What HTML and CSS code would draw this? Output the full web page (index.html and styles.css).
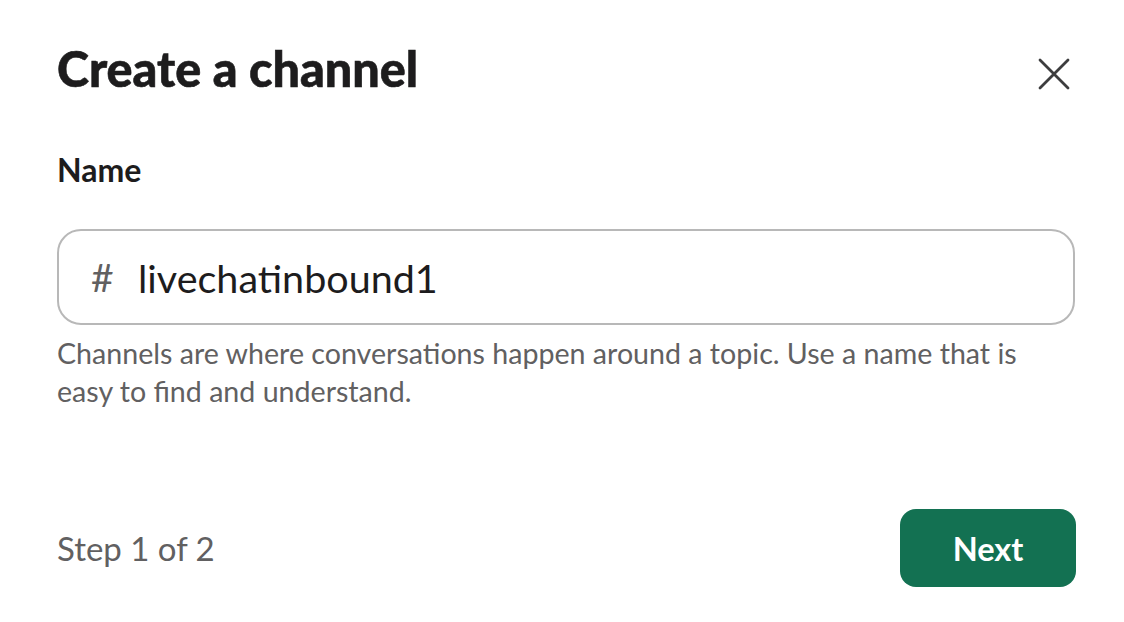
FILE: index.html
```html
<!DOCTYPE html>
<html lang="en">
<head>
<meta charset="utf-8">
<title>Create a channel</title>
<link rel="stylesheet" href="styles.css">
</head>
<body>
<div class="modal">
  <header class="modal-header">
    <h1 class="title">Create a channel</h1>
    <button class="close" aria-label="Close">
      <svg width="32" height="32" viewBox="0 0 32 32" aria-hidden="true">
        <path d="M2 2 L30 30 M30 2 L2 30" stroke="#3d3d3e" stroke-width="2.8" stroke-linecap="round" fill="none"/>
      </svg>
    </button>
  </header>
  <div class="field">
    <label class="label" for="name">Name</label>
    <div class="input">
      <span class="hash">#</span>
      <span class="value" id="name">livechatinbound1</span>
    </div>
    <p class="help">Channels are where conversations happen around a topic. Use a name that is easy to find and understand.</p>
  </div>
  <footer class="modal-footer">
    <span class="step">Step 1 of 2</span>
    <button class="next">Next</button>
  </footer>
</div>
</body>
</html>
```
FILE: styles.css
```css
* { box-sizing: border-box; }
html, body { margin: 0; padding: 0; background: #ffffff; }
body {
  font-family: Lato, "Noto Sans", "Liberation Sans", sans-serif;
  color: #1d1c1d;
  width: 1124px;
  height: 622px;
  overflow: hidden;
}
.modal {
  padding: 40px 49px 0 57px;
}
.modal-header {
  display: flex;
  justify-content: space-between;
  align-items: flex-start;
}
.title {
  margin: 0;
  font-size: 48.5px;
  line-height: 56px;
  font-weight: 900;
  color: #1d1c1d;
  -webkit-text-stroke: 0.6px #1d1c1d;
}
.close {
  border: 0;
  background: none;
  padding: 0;
  margin: 18px 5px 0 0;
  width: 32px;
  height: 32px;
  display: flex;
}
.field {
  margin-top: 56px;
  display: flex;
  flex-direction: column;
}
.label {
  font-size: 32px;
  line-height: 36px;
  font-weight: 700;
  color: #1d1c1d;
}
.input {
  margin-top: 41px;
  height: 96px;
  border: 2px solid #b8b8b8;
  border-radius: 24px;
  display: flex;
  align-items: center;
  padding: 0 0 0 32px;
}
.hash {
  font-size: 39px;
  color: #616061;
  width: 47px;
}
.value {
  font-size: 39.5px;
  color: #1d1c1d;
}
.help {
  margin: 9px 0 0 0;
  font-size: 28.6px;
  line-height: 38px;
  color: #616061;
}
.modal-footer {
  margin-top: 99px;
  display: flex;
  justify-content: space-between;
  align-items: center;
}
.step {
  font-size: 33px;
  color: #616061;
}
.next {
  width: 176px;
  height: 78px;
  margin-right: -1px;
  border: 0;
  border-radius: 16px;
  background: #137152;
  color: #ffffff;
  font-family: Lato, "Noto Sans", "Liberation Sans", sans-serif;
  font-weight: 700;
  font-size: 32.5px;
}
```
